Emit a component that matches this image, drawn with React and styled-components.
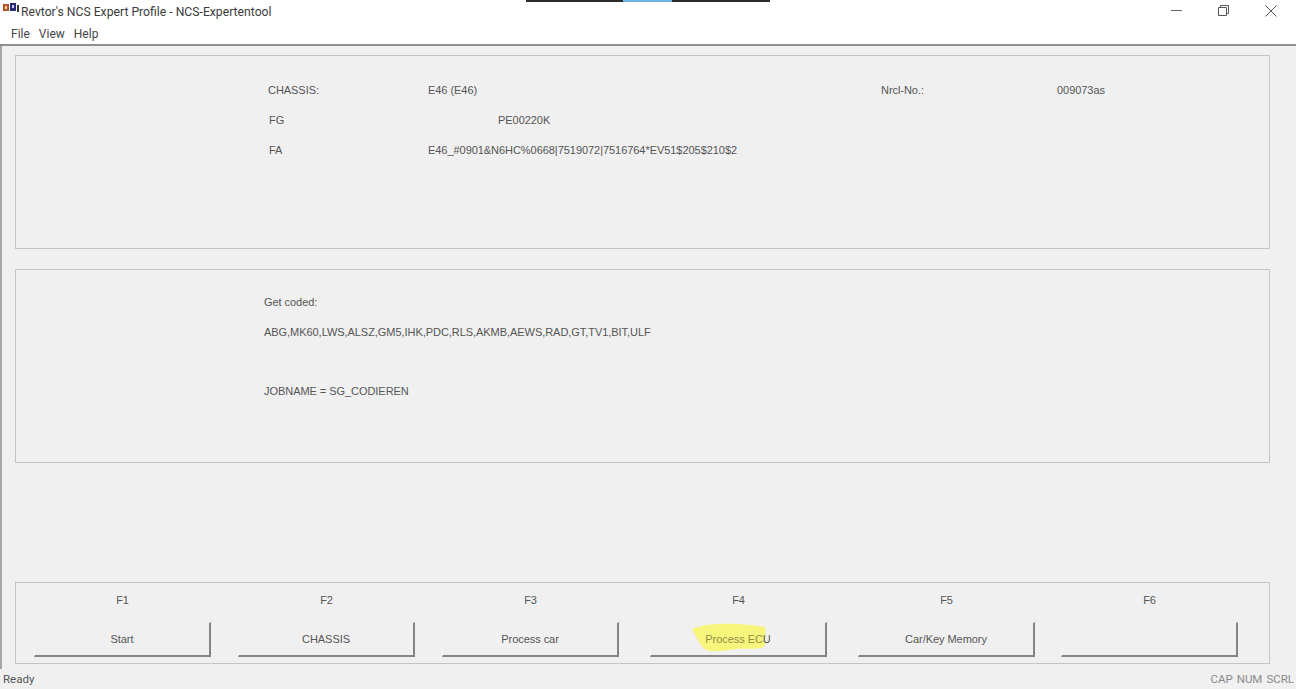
import React from 'react';
import styled, { createGlobalStyle } from 'styled-components';

const GlobalStyle = createGlobalStyle`
  html, body {
    margin: 0;
    padding: 0;
    background: #f0f0f0;
  }
`;

const Window = styled.div`
  position: relative;
  width: 1296px;
  height: 689px;
  overflow: hidden;
  display: flex;
  flex-direction: column;
  background: #f0f0f0;
  font-family: 'Liberation Sans', Arial, sans-serif;
  font-size: 11px;
  letter-spacing: -0.05px;
  color: #555;
`;

const ScreenBar = styled.div`
  position: absolute;
  top: 0;
  left: 526px;
  width: 244px;
  height: 2px;
  background: #2b2b2b;

  &::after {
    content: '';
    position: absolute;
    left: 97px;
    width: 49px;
    height: 2px;
    background: #6cb4e4;
  }
`;

const TitleBar = styled.div`
  height: 23px;
  display: flex;
  align-items: center;
  background: #fff;
  font-family: Roboto, sans-serif;
  font-size: 12.2px;
  letter-spacing: 0;
  color: #3c3c3c;
`;

const AppIcon = styled.svg`
  width: 18px;
  height: 14px;
  margin: -6px 1px 0 2px;
`;

const TitleText = styled.span`
  flex: 1;
`;

const WinControls = styled.div`
  display: flex;
  align-items: center;
  gap: 36px;
  padding-right: 19px;
  margin-top: -2px;
`;

const MenuBar = styled.div`
  height: 21px;
  display: flex;
  align-items: center;
  gap: 9px;
  padding-left: 11px;
  background: #fff;
  border-bottom: 2px solid #8f8f8f;
  font-family: Roboto, sans-serif;
  font-size: 12px;
  letter-spacing: 0;
  color: #444;
`;

const Client = styled.div`
  flex: 1;
  display: flex;
  flex-direction: column;
  padding: 9px 26px 0 13px;
  border-left: 2px solid #a6a6a6;
`;

const Panel = styled.div`
  height: ${p => p.$h}px;
  margin-bottom: ${p => p.$gap || 0}px;
  box-sizing: border-box;
  border: 1px solid #c4c4c4;
  background: #f0f0f0;
`;

const InfoGrid = styled.div`
  display: grid;
  grid-template-columns: 160px 453px 176px 1fr;
  grid-auto-rows: 30px;
  padding: 19px 0 0 252px;
  align-items: center;
`;

const Indented = styled.span`
  margin-left: 70px;
`;

const ShortLabel = styled.span`
  margin-left: 1px;
`;

const Lines = styled.div`
  display: flex;
  flex-direction: column;
  padding: 24px 0 0 248px;
`;

const Line = styled.div`
  height: 16px;
  line-height: 16px;
  margin-bottom: ${p => p.$after}px;
`;

const KeysRow = styled.div`
  display: flex;
  padding: 10px 0 0 18px;
`;

const KeyCell = styled.div`
  width: ${p => p.$w}px;
  flex: none;
`;

const KeyLabel = styled.div`
  width: 177px;
  height: 15px;
  line-height: 15px;
  text-align: center;
  margin-bottom: 14px;
`;

const KeyButton = styled.div`
  position: relative;
  width: 177px;
  height: 35px;
  box-sizing: border-box;
  display: flex;
  align-items: center;
  justify-content: center;
  border-top: 1px solid #f4f4f4;
  border-left: 1px solid #f4f4f4;
  border-right: 2px solid #858585;
  border-bottom: 2px solid #858585;
`;

const KeyText = styled.span`
  position: relative;
`;

const Tinted = styled.span`
  color: #8f8f48;
`;

const Marker = styled.svg`
  position: absolute;
  left: 40px;
  top: 0;
  width: 76px;
  height: 30px;
`;

const StatusBar = styled.div`
  height: 20px;
  display: flex;
  align-items: center;
  justify-content: space-between;
  padding: 0 2px 0 3px;
  font-family: Roboto, sans-serif;
  font-size: 11.5px;
  letter-spacing: 0;
  color: #555;
`;

const StatusFlags = styled.div`
  display: flex;
  gap: 4px;
  color: #8a8a8a;
`;

const keys = [
  { key: 'F1', label: 'Start', w: 204 },
  { key: 'F2', label: 'CHASSIS', w: 204 },
  { key: 'F3', label: 'Process car', w: 208 },
  { key: 'F4', label: 'U', tinted: 'Process EC', w: 208 },
  { key: 'F5', label: 'Car/Key Memory', w: 203 },
  { key: 'F6', label: '', w: 177 },
];

export default function App() {
  return (
    <Window>
      <GlobalStyle />
      <ScreenBar />
      <TitleBar>
        <AppIcon viewBox="0 0 18 14">
          <rect x="1" y="2" width="6" height="7" fill="#b5542c" />
          <rect x="3" y="4" width="2" height="3" fill="#e8d8a0" />
          <rect x="8" y="1" width="6" height="8" fill="#2a2a7a" />
          <rect x="10" y="3" width="2" height="3" fill="#c8c8e8" />
          <rect x="15" y="3" width="2" height="7" fill="#333" />
        </AppIcon>
        <TitleText>Revtor's NCS Expert Profile - NCS-Expertentool</TitleText>
        <WinControls>
          <svg width="11" height="11" viewBox="0 0 11 11">
            <path d="M0 5.5h11" stroke="#666" fill="none" />
          </svg>
          <svg width="11" height="11" viewBox="0 0 11 11">
            <path d="M.5 2.5h8v8h-8zM2.5 2.5v-2h8v8h-2" stroke="#555" fill="none" />
          </svg>
          <svg width="12" height="12" viewBox="0 0 12 12">
            <path d="M.5.5l11 11M11.5.5l-11 11" stroke="#555" fill="none" />
          </svg>
        </WinControls>
      </TitleBar>
      <MenuBar>
        <span>File</span>
        <span>View</span>
        <span>Help</span>
      </MenuBar>
      <Client>
        <Panel $h={194} $gap={20}>
          <InfoGrid>
            <span>CHASSIS:</span>
            <span>E46 (E46)</span>
            <span>Nrcl-No.:</span>
            <span>009073as</span>
            <ShortLabel>FG</ShortLabel>
            <Indented>PE00220K</Indented>
            <span />
            <span />
            <ShortLabel>FA</ShortLabel>
            <span>E46_#0901&amp;N6HC%0668|7519072|7516764*EV51$205$210$2</span>
          </InfoGrid>
        </Panel>
        <Panel $h={194} $gap={119}>
          <Lines>
            <Line $after={14}>Get coded:</Line>
            <Line $after={43}>ABG,MK60,LWS,ALSZ,GM5,IHK,PDC,RLS,AKMB,AEWS,RAD,GT,TV1,BIT,ULF</Line>
            <Line $after={0}>JOBNAME = SG_CODIEREN</Line>
          </Lines>
        </Panel>
        <Panel $h={82}>
          <KeysRow>
            {keys.map(k => (
              <KeyCell key={k.key} $w={k.w}>
                <KeyLabel>{k.key}</KeyLabel>
                <KeyButton>
                  {k.tinted && (
                    <Marker viewBox="0 0 76 30">
                      <path
                        d="M1 6C10 1 30 0 46 1c10 1 18 1 28 3 1 6 1 15-1 20-8 3-18 1-28 2-10 1-22 4-30 1C9 23 5 13 1 6z"
                        fill="#f8f57c"
                      />
                    </Marker>
                  )}
                  <KeyText>
                    {k.tinted && <Tinted>{k.tinted}</Tinted>}
                    {k.label}
                  </KeyText>
                </KeyButton>
              </KeyCell>
            ))}
          </KeysRow>
        </Panel>
      </Client>
      <StatusBar>
        <span>Ready</span>
        <StatusFlags>
          <span>CAP</span>
          <span>NUM</span>
          <span>SCRL</span>
        </StatusFlags>
      </StatusBar>
    </Window>
  );
}
